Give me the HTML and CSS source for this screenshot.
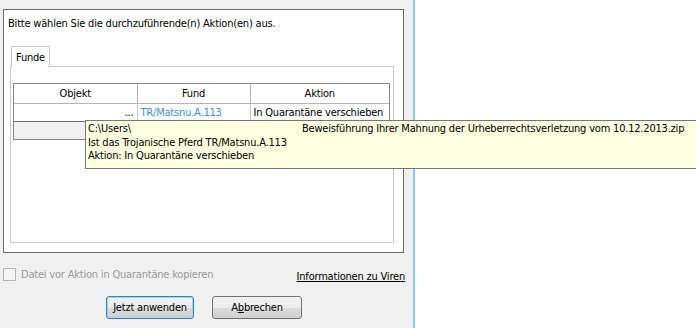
FILE: index.html
```html
<!DOCTYPE html>
<html lang="de">
<head>
  <meta charset="UTF-8">
  <title>Aktion auswählen</title>
  <link rel="stylesheet" href="styles.css">
</head>
<body>
  <div class="screen">
    <!-- Dialog -->
    <div class="dialog">
      <div class="frame">
        <p class="prompt">Bitte wählen Sie die durchzuführende(n) Aktion(en) aus.</p>

        <div class="tabs">
          <div class="tab active-tab">Funde</div>
        </div>

        <div class="panel">
          <div class="listbox">
            <table class="list">
              <colgroup>
                <col class="col-obj">
                <col class="col-fund">
                <col class="col-aktion">
              </colgroup>
              <thead>
                <tr>
                  <th>Objekt</th>
                  <th>Fund</th>
                  <th>Aktion</th>
                </tr>
              </thead>
              <tbody>
                <tr>
                  <td class="obj">...</td>
                  <td class="fund">TR/Matsnu.A.113</td>
                  <td>In Quarantäne verschieben</td>
                </tr>
              </tbody>
            </table>
            <div class="strip"></div>
          </div>
        </div>
      </div>

      <div class="options">
        <label class="check">
          <span class="box"></span>
          Datei vor Aktion in Quarantäne kopieren
        </label>
        <a class="info" href="#">Informationen zu Viren</a>
      </div>

      <div class="buttons">
        <button class="btn default-btn"><u>J</u>etzt anwenden</button>
        <button class="btn">A<u>b</u>brechen</button>
      </div>
    </div>

    <div class="desktop"></div>

    <!-- Tooltip über der Liste -->
    <div class="tooltip">
      <div class="tip-line">
        <span class="tip-path">C:\Users\</span>
        <span>Beweisführung Ihrer Mahnung der Urheberrechtsverletzung vom 10.12.2013.zip</span>
      </div>
      <div class="tip-line">Ist das Trojanische Pferd TR/Matsnu.A.113</div>
      <div class="tip-line">Aktion: In Quarantäne verschieben</div>
    </div>
  </div>
</body>
</html>
```

FILE: styles.css
```css
body {
  margin: 0;
  font-family: "DejaVu Sans Condensed", "DejaVu Sans", sans-serif;
  font-stretch: condensed;
  font-size: 11px;
  letter-spacing: -0.2px;
  color: #000;
}

.screen {
  position: relative;
  display: flex;
  width: 696px;
  height: 328px;
  overflow: hidden;
}

.dialog {
  width: 413px;
  background-color: #f0f0f0;
  border-right: 2px solid #8cc8ee;
  display: flex;
  flex-direction: column;
}

.desktop {
  flex: 1;
  background-color: #fff;
}

.frame {
  margin: 9px 0 0 3px;
  width: 399px;
  height: 242px;
  border: 1px solid #6d6d6d;
  background-color: #fff;
  display: flex;
  flex-direction: column;
}

.prompt {
  margin: 7px 0 0 4px;
  line-height: 13px;
}

.tabs {
  display: flex;
  margin: 16px 0 0 7px;
}

.tab {
  position: relative;
  z-index: 1;
  padding: 0 4px;
  height: 20px;
  line-height: 21px;
  border: 1px solid #c9c9c9;
  border-bottom: none;
  background-color: #fff;
  margin-bottom: -1px;
}

.panel {
  margin: 0 9px 9px 6px;
  flex: 1;
  border: 1px solid #c9c9c9;
  padding: 16px 3px 0 2px;
}

.listbox {
  border: 1px solid #828790;
}

.list {
  width: 100%;
  border-collapse: collapse;
  table-layout: fixed;
}

.col-obj { width: 123px; }
.col-fund { width: 113px; }

.list th {
  font-weight: normal;
  height: 19px;
  padding: 0;
  border-right: 1px solid #b5b5b5;
  border-bottom: 1px solid #b5b5b5;
}

.list th:last-child,
.list td:last-child {
  border-right: none;
}

.list td {
  height: 17px;
  padding: 0 3px;
  white-space: nowrap;
  border-right: 1px solid #c9c9c9;
}

.obj {
  text-align: right;
}

.fund {
  color: #3b8ee3;
}

.strip {
  height: 17px;
  border-top: 1px solid #6d6d6d;
  background-color: #f0f0f0;
}

.options {
  display: flex;
  justify-content: space-between;
  align-items: center;
  margin: 15px 8px 0 3px;
  height: 13px;
}

.check {
  display: flex;
  align-items: center;
  gap: 5px;
  color: #9a9a9a;
}

.box {
  width: 11px;
  height: 11px;
  border: 1px solid #b4b4b4;
  background-color: #f4f4f4;
}

.info {
  color: #000;
  text-decoration: underline;
  margin-top: 3px;
}

.buttons {
  display: flex;
  gap: 18px;
  margin: 15px 0 0 106px;
}

.btn {
  font-family: inherit;
  font-stretch: condensed;
  font-size: 11px;
  letter-spacing: -0.2px;
  height: 23px;
  padding: 0;
  color: #000;
  border: 1px solid #707070;
  border-radius: 3px;
  background: linear-gradient(#f2f2f2 0%, #ebebeb 50%, #dddddd 51%, #cfcfcf 100%);
}

.btn:first-child { width: 88px; }
.btn:last-child { width: 90px; }

.default-btn {
  border-color: #3c7fb1;
  box-shadow: inset 0 0 0 1px #9fd5f4;
}

.tooltip {
  position: absolute;
  left: 85px;
  top: 120px;
  width: 650px;
  height: 40px;
  padding: 1px 2px 6px;
  border: 1px solid #767676;
  background-color: #ffffe1;
  line-height: 13.5px;
}

.tip-line {
  display: flex;
  white-space: nowrap;
}

.tip-path {
  width: 214px;
}
```
